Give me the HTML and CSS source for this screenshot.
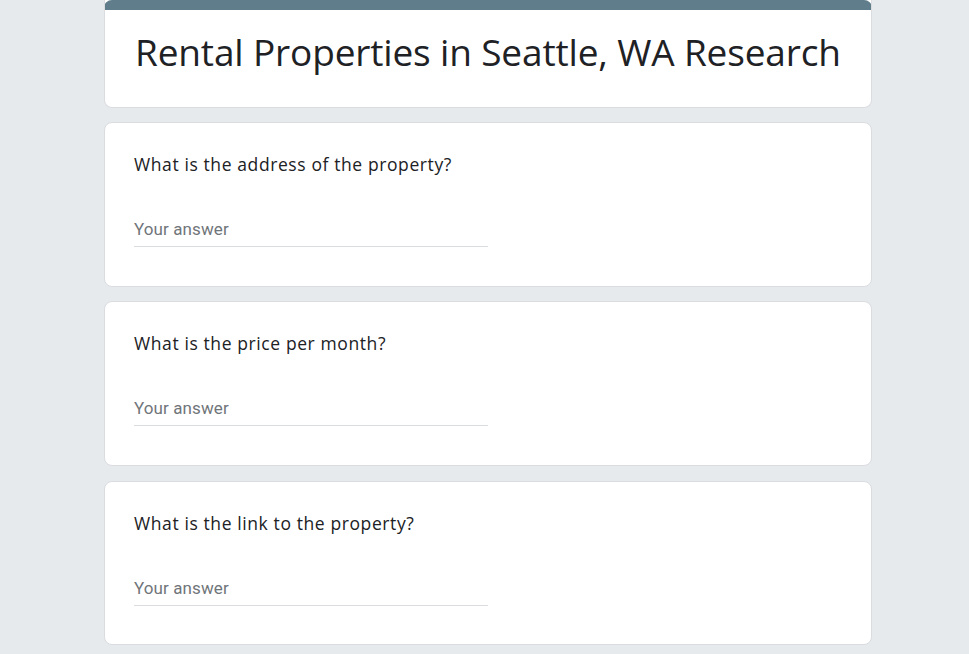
FILE: index.html
```html
<!DOCTYPE html>
<html>
<head>
<meta charset="utf-8">
<link rel="stylesheet" href="styles.css">
</head>
<body>
<main class="form">
  <section class="card header-card">
    <div class="accent"></div>
    <h1 class="title">Rental Properties in Seattle, WA Research</h1>
  </section>
  <section class="card question">
    <div class="q-text">What is the address of the property?</div>
    <div class="answer"><span class="placeholder">Your answer</span></div>
  </section>
  <section class="card question">
    <div class="q-text">What is the price per month?</div>
    <div class="answer"><span class="placeholder">Your answer</span></div>
  </section>
  <section class="card question">
    <div class="q-text">What is the link to the property?</div>
    <div class="answer"><span class="placeholder">Your answer</span></div>
  </section>
</main>
</body>
</html>
```

FILE: styles.css
```css
html, body {
  margin: 0;
  padding: 0;
  background: #e6eaed;
}
body {
  font-family: "Open Sans", "Noto Sans", sans-serif;
  color: #202124;
}
.form {
  width: 768px;
  margin-left: 104px;
  display: flex;
  flex-direction: column;
  gap: 14px;
}
.card {
  background: #fff;
  border: 1px solid #dadce0;
  border-radius: 8px;
  box-sizing: border-box;
}
.header-card {
  border-top: none;
  border-radius: 0 0 8px 8px;
  height: 108px;
  overflow: hidden;
}
.accent {
  height: 10px;
  background: #607d8b;
  border-radius: 8px 8px 0 0;
  margin: 0 -1px;
}
.title {
  margin: 0;
  padding: 18px 30px 0 30px;
  font-weight: 400;
  font-size: 37px;
  line-height: 48px;
  letter-spacing: -0.15px;
  white-space: nowrap;
}
.question {
  height: 165px;
  padding: 29px 29px 0 29px;
}
.question:last-child {
  margin-top: 1px;
  height: 164px;
}
.q-text {
  font-size: 17.5px;
  line-height: 24px;
  letter-spacing: 0.6px;
}
.answer {
  margin-top: 43px;
  width: 354px;
  border-bottom: 1px solid #dadce0;
  padding-bottom: 7px;
}
.placeholder {
  font-family: Roboto, "Liberation Sans", sans-serif;
  font-size: 17px;
  line-height: 20px;
  letter-spacing: 0.1px;
  color: #70757a;
  display: block;
}
```
